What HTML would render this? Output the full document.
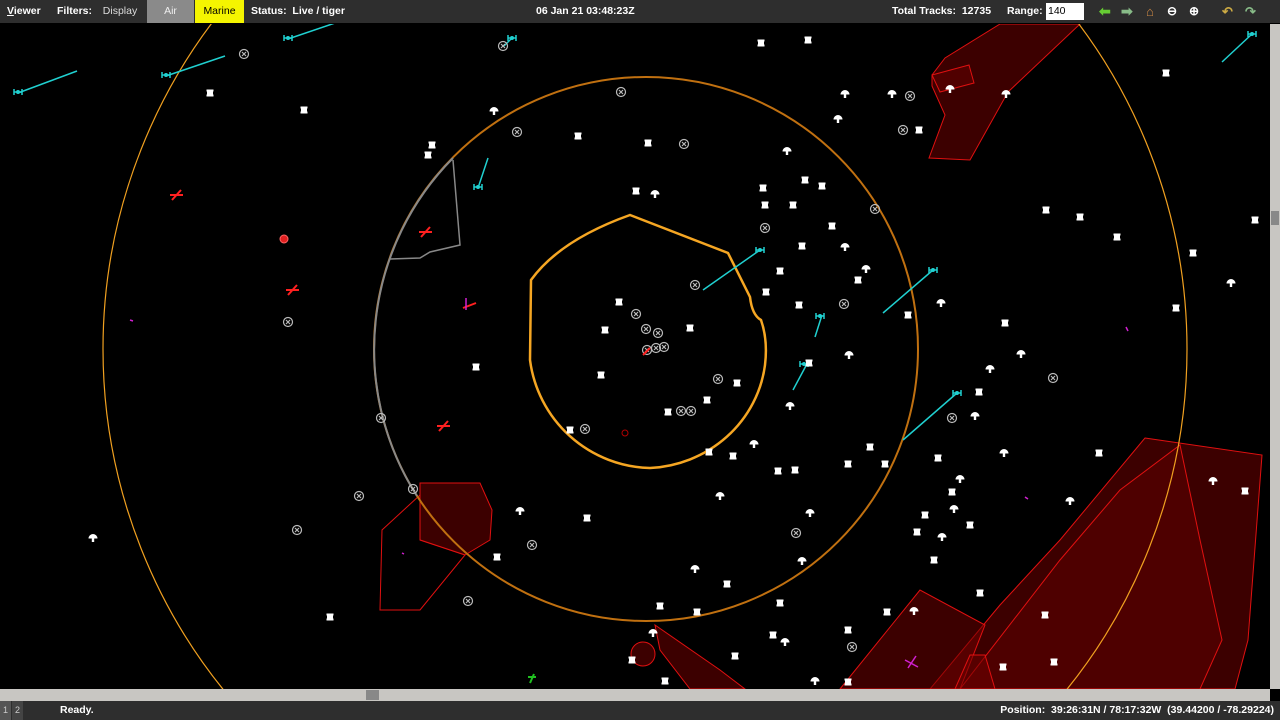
<!DOCTYPE html>
<html><head><meta charset="utf-8"><style>
html,body{margin:0;width:1280px;height:720px;overflow:hidden}
body{background:#000;font-family:"Liberation Sans",sans-serif;position:relative}
#tb{position:absolute;left:0;top:0;width:1280px;height:23px;background:#2e2e2e;color:#fff;font-size:10.5px;font-weight:bold}
#tb span{position:absolute;top:0;height:23px;line-height:23px}
#sb{position:absolute;left:0;top:701px;width:1280px;height:19px;background:#2e2e2e;color:#fff;font-size:10.5px}
#hs{position:absolute;left:0;top:689px;width:1270px;height:12px;background:#c8c6c2}
#vs{position:absolute;left:1270px;top:24px;width:10px;height:665px;background:#c8c6c2}
svg{display:block}
</style></head><body>
<svg width="1280" height="720" style="position:absolute;left:0;top:0">
<defs>
<clipPath id="cl"><rect x="0" y="24" width="1270" height="665"/></clipPath>
<g id="s"><rect x="-3" y="-1.5" width="6" height="3" fill="#fff"/><rect x="-1.5" y="-3.5" width="3" height="7" fill="#fff"/><rect x="-3.5" y="-3.5" width="2" height="2" fill="#fff"/><rect x="1.5" y="1.5" width="2" height="2" fill="#fff"/><rect x="1.5" y="-3.5" width="2" height="2" fill="#fff"/><rect x="-3.5" y="1.5" width="2" height="2" fill="#fff"/></g>
<g id="a"><path d="M-4.5,1.5 A4.5,4.5 0 0 1 4.5,1.5 L1.2,1.5 L1.2,5 L-1.2,5 L-1.2,1.5Z" fill="#fff"/></g>
<g id="c"><circle r="4.5" fill="none" stroke="#bbb" stroke-width="1.2"/><path d="M-2,-2L2,2M2,-2L-2,2" stroke="#bbb" stroke-width="1.2"/></g>
<g id="h"><path d="M-4,-3V3M4,-3V3M-4,0H4" stroke="#20d0d0" stroke-width="1.5"/><circle r="2" fill="#20d0d0"/></g>
</defs>
<g clip-path="url(#cl)">
<g fill="rgba(110,0,0,0.55)" stroke="#e01010" stroke-width="1">
<polygon points="1000,24 1080,24 1008,92 970,160 929,158 945,115 932,86 932,75 945,58"/>
<polygon points="932,75 969,65 974,83 940,92" fill="rgba(110,0,0,0.4)"/>
<polygon points="1145,438 1262,455 1248,640 1235,689 930,689 1000,605 1060,540"/>
<polygon points="1180,445 1200,540 1222,640 1200,689 960,689 1060,560 1120,490" fill="rgba(90,0,0,0.6)"/>
<polygon points="420,483 480,483 492,510 490,540 465,555 420,540"/>
<polygon points="382,530 420,495 420,540 465,555 420,610 380,610" fill="none"/>
<polygon points="655,625 720,670 745,689 690,689 660,650"/>
<circle cx="643" cy="654" r="12"/>
<polygon points="840,689 920,590 985,625 960,689"/>
<polygon points="955,689 970,655 985,655 995,689"/>
</g>
<circle cx="645" cy="349" r="542" fill="none" stroke="#f0a020" stroke-width="1.2"/>
<circle cx="646" cy="349" r="272" fill="none" stroke="#c07010" stroke-width="2"/>
<path d="M453,158 A272,272 0 0 0 417,496" fill="none" stroke="#888" stroke-width="2"/>
<polyline points="453,160 460,245 430,252 420,258 390,259" fill="none" stroke="#888" stroke-width="1.5"/>
<path d="M630,215 L728,253 L750,297 Q752,315 761,320 Q768,340 765,365 A122,118 0 0 1 650,468 A124,124 0 0 1 530,360 L531,280 Q560,240 630,215Z" fill="none" stroke="#f5a623" stroke-width="2.5"/>
<g stroke="#20d0d0" stroke-width="1.5">
<line x1="18" y1="93" x2="77" y2="71"/><line x1="166" y1="76" x2="225" y2="56"/><line x1="288" y1="39" x2="338" y2="22"/>
<line x1="478" y1="188" x2="488" y2="158"/><line x1="703" y1="290" x2="760" y2="250"/><line x1="1222" y1="62" x2="1252" y2="34"/>
<line x1="815" y1="337" x2="822" y2="315"/><line x1="883" y1="313" x2="933" y2="270"/><line x1="793" y1="390" x2="808" y2="362"/>
<line x1="903" y1="440" x2="957" y2="393"/><line x1="504" y1="46" x2="512" y2="38"/>
</g>
<use href="#h" x="18" y="92"/><use href="#h" x="166" y="75"/><use href="#h" x="288" y="38"/><use href="#h" x="478" y="187"/><use href="#h" x="760" y="250"/><use href="#h" x="1252" y="34"/><use href="#h" x="933" y="270"/><use href="#h" x="957" y="393"/><use href="#h" x="820" y="316"/><use href="#h" x="804" y="364"/><use href="#h" x="512" y="38"/>
<g>
<use href="#s" x="761" y="43"/><use href="#s" x="808" y="40"/><use href="#s" x="304" y="110"/><use href="#a" x="494" y="110"/><use href="#s" x="578" y="136"/><use href="#s" x="432" y="145"/><use href="#s" x="428" y="155"/><use href="#s" x="648" y="143"/><use href="#a" x="787" y="150"/><use href="#a" x="845" y="93"/><use href="#a" x="838" y="118"/><use href="#a" x="892" y="93"/><use href="#s" x="919" y="130"/><use href="#a" x="1006" y="93"/><use href="#a" x="950" y="88"/><use href="#s" x="1166" y="73"/><use href="#s" x="763" y="188"/><use href="#s" x="765" y="205"/><use href="#s" x="822" y="186"/><use href="#s" x="636" y="191"/><use href="#a" x="655" y="193"/><use href="#s" x="832" y="226"/><use href="#s" x="802" y="246"/><use href="#a" x="845" y="246"/><use href="#s" x="780" y="271"/><use href="#a" x="866" y="268"/><use href="#s" x="858" y="280"/><use href="#s" x="799" y="305"/><use href="#s" x="908" y="315"/><use href="#a" x="941" y="302"/><use href="#s" x="1080" y="217"/><use href="#s" x="1117" y="237"/><use href="#s" x="1193" y="253"/><use href="#s" x="1255" y="220"/><use href="#a" x="1231" y="282"/><use href="#s" x="1176" y="308"/><use href="#s" x="1005" y="323"/><use href="#a" x="1021" y="353"/><use href="#a" x="990" y="368"/><use href="#a" x="849" y="354"/><use href="#s" x="809" y="363"/><use href="#a" x="790" y="405"/><use href="#s" x="737" y="383"/><use href="#s" x="707" y="400"/><use href="#s" x="605" y="330"/><use href="#s" x="476" y="367"/><use href="#s" x="619" y="302"/><use href="#s" x="979" y="392"/><use href="#a" x="975" y="415"/><use href="#a" x="754" y="443"/><use href="#s" x="733" y="456"/><use href="#s" x="709" y="452"/><use href="#s" x="778" y="471"/><use href="#s" x="795" y="470"/><use href="#s" x="848" y="464"/><use href="#s" x="870" y="447"/><use href="#s" x="885" y="464"/><use href="#s" x="938" y="458"/><use href="#a" x="1004" y="452"/><use href="#s" x="1099" y="453"/><use href="#a" x="960" y="478"/><use href="#s" x="952" y="492"/><use href="#a" x="1070" y="500"/><use href="#a" x="954" y="508"/><use href="#s" x="925" y="515"/><use href="#s" x="970" y="525"/><use href="#a" x="942" y="536"/><use href="#s" x="917" y="532"/><use href="#s" x="934" y="560"/><use href="#a" x="1213" y="480"/><use href="#s" x="1245" y="491"/><use href="#a" x="720" y="495"/><use href="#a" x="810" y="512"/><use href="#a" x="520" y="510"/><use href="#s" x="587" y="518"/><use href="#s" x="497" y="557"/><use href="#a" x="802" y="560"/><use href="#a" x="695" y="568"/><use href="#s" x="727" y="584"/><use href="#s" x="780" y="603"/><use href="#s" x="697" y="612"/><use href="#s" x="660" y="606"/><use href="#s" x="887" y="612"/><use href="#a" x="914" y="610"/><use href="#s" x="980" y="593"/><use href="#s" x="1045" y="615"/><use href="#s" x="773" y="635"/><use href="#a" x="785" y="641"/><use href="#s" x="848" y="630"/><use href="#s" x="735" y="656"/><use href="#s" x="1003" y="667"/><use href="#s" x="1054" y="662"/><use href="#s" x="665" y="681"/><use href="#a" x="815" y="680"/><use href="#s" x="848" y="682"/><use href="#s" x="632" y="660"/><use href="#a" x="653" y="632"/><use href="#s" x="330" y="617"/><use href="#a" x="93" y="537"/><use href="#s" x="210" y="93"/><use href="#s" x="601" y="375"/><use href="#s" x="690" y="328"/><use href="#s" x="766" y="292"/><use href="#s" x="805" y="180"/><use href="#s" x="793" y="205"/><use href="#s" x="570" y="430"/><use href="#s" x="668" y="412"/><use href="#s" x="1046" y="210"/>
</g>
<g>
<use href="#c" x="244" y="54"/><use href="#c" x="517" y="132"/><use href="#c" x="621" y="92"/><use href="#c" x="684" y="144"/><use href="#c" x="910" y="96"/><use href="#c" x="903" y="130"/><use href="#c" x="875" y="209"/><use href="#c" x="765" y="228"/><use href="#c" x="844" y="304"/><use href="#c" x="695" y="285"/><use href="#c" x="1053" y="378"/><use href="#c" x="952" y="418"/><use href="#c" x="288" y="322"/><use href="#c" x="381" y="418"/><use href="#c" x="359" y="496"/><use href="#c" x="413" y="489"/><use href="#c" x="297" y="530"/><use href="#c" x="532" y="545"/><use href="#c" x="468" y="601"/><use href="#c" x="585" y="429"/><use href="#c" x="681" y="411"/><use href="#c" x="691" y="411"/><use href="#c" x="796" y="533"/><use href="#c" x="852" y="647"/><use href="#c" x="503" y="46"/><use href="#c" x="636" y="314"/><use href="#c" x="646" y="329"/><use href="#c" x="658" y="333"/><use href="#c" x="647" y="350"/><use href="#c" x="656" y="348"/><use href="#c" x="664" y="347"/><use href="#c" x="718" y="379"/>
</g>
<g stroke="#ff2020" stroke-width="2">
<path d="M170,195L183,195M172,200L181,190"/><path d="M419,232L432,232M421,237L430,227"/><path d="M286,290L299,290M288,295L297,285"/><path d="M437,426L450,426M439,431L448,421"/><path d="M463,308L476,303M643,355L650,348"/>
</g>
<circle cx="284" cy="239" r="4" fill="#e02020" stroke="#f66"/><circle cx="625" cy="433" r="3" fill="none" stroke="#b00000"/>
<g stroke="#d020d0" stroke-width="1.5"><path d="M905,660L918,667M908,668L916,656"/><path d="M466,298L466,310M130,320L133,321M1126,327L1128,331M1025,497L1028,499M402,553L404,554"/></g>
<path d="M528,677L536,677M530,683L534,674" stroke="#20c020" stroke-width="2"/>
</g>
</svg>
<div id="tb">
<span style="left:7px"><u>V</u>iewer</span>
<span style="left:57px">Filters:</span>
<span style="left:95px;width:50px;text-align:center;font-weight:normal;color:#ddd">Display</span>
<span style="left:147px;width:47px;background:#8a8a8a;text-align:center;font-weight:normal;color:#eee">Air</span>
<span style="left:195px;width:49px;background:#f5f500;color:#000;text-align:center;font-weight:normal">Marine</span>
<span style="left:251px">Status:&nbsp; Live / tiger</span>
<span style="left:536px">06 Jan 21 03:48:23Z</span>
<span style="left:892px">Total Tracks:&nbsp; 12735</span>
<span style="left:1007px">Range:</span>
<span style="left:1046px;top:3px;height:17px;width:36px;background:#fff;color:#000;line-height:17px;font-weight:normal;padding-left:2px">140</span>
<span style="left:1099px;color:#6c3;font-size:14px">&#11013;</span>
<span style="left:1121px;color:#8b8;font-size:14px">&#10145;</span>
<span style="left:1146px;color:#c84;font-size:13px">&#8962;</span>
<span style="left:1167px;font-size:12px">&#8854;</span>
<span style="left:1189px;font-size:12px">&#8853;</span>
<span style="left:1222px;color:#ca4;font-size:13px">&#8630;</span>
<span style="left:1245px;color:#8b8;font-size:13px">&#8631;</span>
</div>
<div id="hs"><div style="position:absolute;left:366px;top:1px;width:13px;height:10px;background:#888"></div></div>
<div id="vs"><div style="position:absolute;left:1px;top:187px;width:8px;height:14px;background:#888"></div></div>
<div id="sb">
<span style="position:absolute;left:0;width:11px;height:19px;background:#555;text-align:center;line-height:19px;font-size:9px;color:#ccc">1</span>
<span style="position:absolute;left:12px;width:11px;height:19px;background:#444;text-align:center;line-height:19px;font-size:9px;color:#ccc">2</span>
<span style="position:absolute;left:60px;line-height:19px;font-weight:bold">Ready.</span>
<span style="position:absolute;right:6px;line-height:19px;font-weight:bold">Position:&nbsp; 39:26:31N / 78:17:32W&nbsp; (39.44200 / -78.29224)</span>
</div>
</body></html>
